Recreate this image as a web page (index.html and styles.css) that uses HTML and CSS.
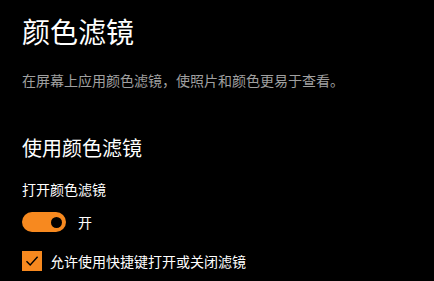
FILE: index.html
```html
<!DOCTYPE html>
<html lang="zh-CN">
<head>
<meta charset="utf-8">
<link rel="stylesheet" href="styles.css">
</head>
<body>
<main class="page">
  <h1 class="title">颜色滤镜</h1>
  <p class="desc">在屏幕上应用颜色滤镜，使照片和颜色更易于查看。</p>
  <h2 class="section">使用颜色滤镜</h2>
  <div class="label">打开颜色滤镜</div>
  <div class="toggle-row">
    <span class="toggle"><span class="knob"></span></span>
    <span class="toggle-text">开</span>
  </div>
  <label class="check-row">
    <span class="checkbox">
      <svg width="20" height="20" viewBox="0 0 20 20"><path d="M4.5 10.2 L8.2 14 L15.6 5.8" fill="none" stroke="#000" stroke-width="1.4"/></svg>
    </span>
    <span class="check-text">允许使用快捷键打开或关闭滤镜</span>
  </label>
</main>
</body>
</html>
```
FILE: styles.css
```css
html, body {
  margin: 0;
  padding: 0;
  background: #000;
  color: #fff;
  font-family: "Noto Sans CJK SC", "Noto Sans", sans-serif;
  text-spacing-trim: space-all;
}
.page {
  padding: 13px 22px 0 22px;
  display: flex;
  flex-direction: column;
  align-items: flex-start;
}
.title {
  margin: 0;
  font-size: 28px;
  line-height: 36px;
  font-weight: 400;
}
.desc {
  margin: 21px 0 0 0;
  font-size: 14px;
  line-height: 20px;
  color: #a0a0a0;
}
.section {
  margin: 44px 0 0 0;
  font-size: 20px;
  line-height: 28px;
  font-weight: 400;
}
.label {
  margin-top: 17px;
  font-size: 14px;
  line-height: 20px;
}
.toggle-row {
  margin-top: 13px;
  display: flex;
  align-items: center;
  gap: 12px;
}
.toggle {
  width: 44px;
  height: 20px;
  border-radius: 10px;
  background: #f7891f;
  display: flex;
  align-items: center;
  justify-content: flex-end;
  padding-right: 4px;
  box-sizing: border-box;
}
.knob {
  width: 11px;
  height: 11px;
  border-radius: 50%;
  background: #000;
}
.toggle-text {
  font-size: 14px;
  line-height: 20px;
}
.check-row {
  margin-top: 19px;
  display: flex;
  align-items: center;
  gap: 8px;
}
.checkbox {
  width: 20px;
  height: 20px;
  background: #f7891f;
  display: block;
}
.checkbox svg {
  display: block;
}
.check-text {
  font-size: 14px;
  line-height: 20px;
}
```
